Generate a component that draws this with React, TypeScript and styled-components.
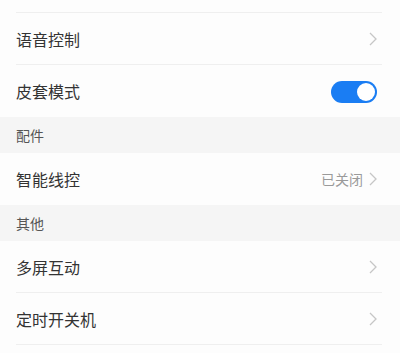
import styled, { createGlobalStyle } from "styled-components";

const GlobalStyle = createGlobalStyle`
    body {
        margin: 0;
        background: #ffffff;
        font-family: "Noto Sans CJK SC", "Noto Sans", sans-serif;
    }
`;

const Page = styled.div`
    width: 400px;
    height: 353px;
    overflow: hidden;
    background: #fdfdfd;
    display: flex;
    flex-direction: column;
`;

const TopEdge = styled.div`
    height: 13px;
    box-sizing: border-box;
    margin: 0 18px 0 16px;
    border-bottom: 1px solid #efefef;
    flex-shrink: 0;
`;

const Row = styled.div`
    height: 52px;
    padding-left: 16px;
    display: flex;
    flex-shrink: 0;
    background: #fdfdfd;
`;

const RowBody = styled.div<{ $divider?: boolean }>`
    flex: 1;
    margin-right: 18px;
    padding-right: 5px;
    display: flex;
    align-items: center;
    justify-content: space-between;
    box-sizing: border-box;
    border-bottom: ${(p) => (p.$divider ? "1px solid #efefef" : "none")};
`;

const Label = styled.span`
    font-size: 16px;
    color: #333333;
`;

const Right = styled.div`
    display: flex;
    align-items: center;
    gap: 6px;
`;

const Value = styled.span`
    font-size: 14px;
    color: #9a9a9a;
`;

const SectionHeader = styled.div`
    height: 36px;
    flex-shrink: 0;
    padding-left: 16px;
    display: flex;
    align-items: center;
    background: #f5f5f5;
    font-size: 14px;
    color: #555555;
`;

const Track = styled.div<{ $on: boolean }>`
    width: 46px;
    height: 22px;
    border-radius: 11px;
    background: ${(p) => (p.$on ? "#1a7df3" : "#d8d8d8")};
    display: flex;
    align-items: center;
    justify-content: ${(p) => (p.$on ? "flex-end" : "flex-start")};
    padding: 0 2px;
    box-sizing: border-box;
    margin-top: 2px;
`;

const Knob = styled.div`
    width: 18px;
    height: 18px;
    border-radius: 50%;
    background: #ffffff;
`;

const Chevron = () => (
    <svg width="8" height="14" viewBox="0 0 8 14">
        <polyline points="1,1 7,7 1,13" fill="none" stroke="#c6c6c6" strokeWidth="1.3" />
    </svg>
);

const Toggle = ({ on }: { on: boolean }) => (
    <Track $on={on}>
        <Knob />
    </Track>
);

const App = () => {
    return (
        <>
            <GlobalStyle />
            <Page>
                <TopEdge />
                <Row>
                    <RowBody $divider>
                        <Label>语音控制</Label>
                        <Chevron />
                    </RowBody>
                </Row>
                <Row>
                    <RowBody>
                        <Label>皮套模式</Label>
                        <Toggle on={true} />
                    </RowBody>
                </Row>
                <SectionHeader>配件</SectionHeader>
                <Row>
                    <RowBody>
                        <Label>智能线控</Label>
                        <Right>
                            <Value>已关闭</Value>
                            <Chevron />
                        </Right>
                    </RowBody>
                </Row>
                <SectionHeader>其他</SectionHeader>
                <Row>
                    <RowBody $divider>
                        <Label>多屏互动</Label>
                        <Chevron />
                    </RowBody>
                </Row>
                <Row>
                    <RowBody $divider>
                        <Label>定时开关机</Label>
                        <Chevron />
                    </RowBody>
                </Row>
            </Page>
        </>
    );
};

export default App;
